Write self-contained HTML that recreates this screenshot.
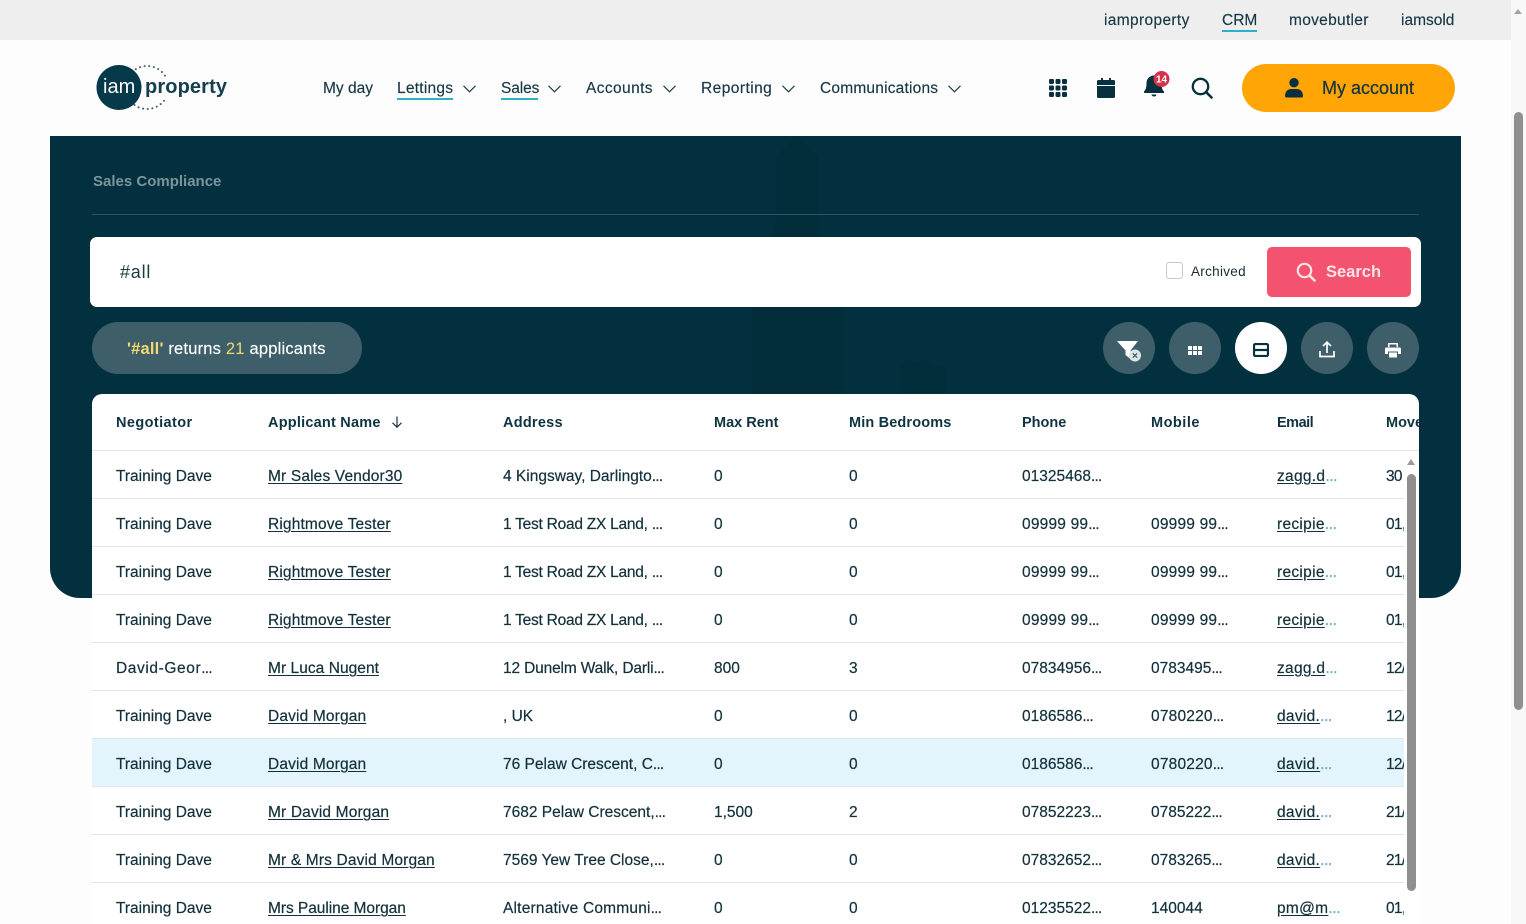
<!DOCTYPE html>
<html lang="en"><head><meta charset="utf-8"><title>Sales Compliance</title>
<style>
*{box-sizing:border-box}
html,body{margin:0;padding:0;width:1526px;height:924px;overflow:hidden;background:#fdfdfd;font-family:"Liberation Sans",sans-serif;color:#0b2f3c}
.a{position:absolute;white-space:nowrap}
#top{position:absolute;left:0;top:0;width:1511px;height:40px;background:#eeeeee}
#sb{position:absolute;left:1511px;top:0;width:15px;height:924px;background:#f8f8f8}
#sb i{position:absolute;left:3px;top:112px;width:9px;height:598px;border-radius:5px;background:#8f8f8f}
#sb b{position:absolute;left:3px;top:9px;width:0;height:0;border-left:4.5px solid transparent;border-right:4.5px solid transparent;border-bottom:5px solid #a3a3a3}
.t{font-size:15.5px;line-height:20px;top:11px;color:#153744;-webkit-text-stroke:.15px #153744}
.n{font-size:15.5px;line-height:20px;top:79px;color:#153744;-webkit-text-stroke:.15px #153744}
.ul{position:absolute;height:2px;background:#2fb0c9}
.chev{position:absolute;top:85px}
#panel{position:absolute;left:50px;top:136px;width:1411px;height:462px;background:#03303f;border-radius:0 0 30px 30px}
#acc{position:absolute;left:1242px;top:64px;width:213px;height:48px;border-radius:24px;background:#ffa505}
.rb{position:absolute;top:322px;width:52px;height:52px;border-radius:50%;background:#3e5f69}
#tbl{position:absolute;left:92px;top:394px;width:1327px;height:530px;background:#fff;border-radius:10px 10px 0 0;overflow:hidden}
.h{position:absolute;top:19px;font-size:14.5px;font-weight:bold;line-height:20px;white-space:nowrap;color:#0f3340}
.r{position:absolute;left:0;width:1312px;height:48px;border-bottom:1px solid #e3e6e8}
.r span{position:absolute;top:16px;font-size:15.5px;line-height:20px;white-space:nowrap;color:#12303c;-webkit-text-stroke:.2px #12303c}
.r u{text-underline-offset:2px}
.r i{font-style:normal;letter-spacing:-.8px}
.e{color:#5cb4d4;text-decoration:none;letter-spacing:-.4px;-webkit-text-stroke:.3px #5cb4d4}
.w{letter-spacing:.2px}
.c1{left:24px}.c2{left:176px;letter-spacing:.15px}.c3{left:411px}.c4{left:622px}.c5{left:757px}.c6{left:930px}.c7{left:1059px}.c8{left:1185px;letter-spacing:.3px}.c9{left:1294px;letter-spacing:-.7px}
</style></head><body>
<div id="top"></div>
<div id="sb"><b></b><i></i></div>
<span class="a t" style="left:1104px;letter-spacing:.35px">iamproperty</span>
<span class="a t" style="left:1222px">CRM</span>
<div class="ul" style="left:1222px;top:30px;width:35px"></div>
<span class="a t" style="left:1289px;letter-spacing:.3px">movebutler</span>
<span class="a t" style="left:1401px">iamsold</span>

<svg class="a" style="left:90px;top:60px" width="145" height="56" viewBox="0 0 145 56">
<circle cx="57" cy="27.5" r="21.5" fill="none" stroke="#4b6670" stroke-width="2" stroke-dasharray="0.1 4.6" stroke-linecap="round"/>
<circle cx="29" cy="27.5" r="22.5" fill="#06394a"/>
<rect x="53" y="18" width="84" height="22" fill="#fdfdfd"/>
<text x="13" y="33" font-family="Liberation Sans" font-size="20" fill="#fff">iam</text>
<text x="55" y="33" font-family="Liberation Sans" font-size="20" font-weight="bold" fill="#143f4d" textLength="82">property</text>
</svg>

<span class="a n" style="left:323px">My day</span>
<span class="a n" style="left:397px;letter-spacing:.25px">Lettings</span>
<div class="ul" style="left:397px;top:98px;width:56px"></div>
<span class="a n" style="left:501px;letter-spacing:-.1px">Sales</span>
<div class="ul" style="left:501px;top:98px;width:37px"></div>
<span class="a n" style="left:586px;letter-spacing:.4px">Accounts</span>
<span class="a n" style="left:701px;letter-spacing:.45px">Reporting</span>
<span class="a n" style="left:820px;letter-spacing:.2px">Communications</span>
<svg class="chev" style="left:463px" width="13" height="8" viewBox="0 0 13 8"><path d="M.5.8 6.500 6.800 12.500.8" fill="none" stroke="#153744" stroke-width="1.100"/></svg>
<svg class="chev" style="left:548px" width="13" height="8" viewBox="0 0 13 8"><path d="M.5.8 6.500 6.800 12.500.8" fill="none" stroke="#153744" stroke-width="1.100"/></svg>
<svg class="chev" style="left:663px" width="13" height="8" viewBox="0 0 13 8"><path d="M.5.8 6.500 6.800 12.500.8" fill="none" stroke="#153744" stroke-width="1.100"/></svg>
<svg class="chev" style="left:782px" width="13" height="8" viewBox="0 0 13 8"><path d="M.5.8 6.500 6.800 12.500.8" fill="none" stroke="#153744" stroke-width="1.100"/></svg>
<svg class="chev" style="left:948px" width="13" height="8" viewBox="0 0 13 8"><path d="M.5.8 6.500 6.800 12.500.8" fill="none" stroke="#153744" stroke-width="1.100"/></svg>

<svg class="a" style="left:1049px;top:79px" width="18" height="18" viewBox="0 0 18 18" fill="#06303f">
<rect x="0" y="0" width="5" height="5" rx="1.200"/><rect x="6.500" y="0" width="5" height="5" rx="1.200"/><rect x="13" y="0" width="5" height="5" rx="1.200"/>
<rect x="0" y="6.500" width="5" height="5" rx="1.200"/><rect x="6.500" y="6.500" width="5" height="5" rx="1.200"/><rect x="13" y="6.500" width="5" height="5" rx="1.200"/>
<rect x="0" y="13" width="5" height="5" rx="1.200"/><rect x="6.500" y="13" width="5" height="5" rx="1.200"/><rect x="13" y="13" width="5" height="5" rx="1.200"/></svg>
<svg class="a" style="left:1097px;top:78px" width="18" height="20" viewBox="0 0 18 20" fill="#06303f">
<path d="M4 0h2v3H4zM12 0h2v3h-2z"/><path d="M1.500 2H16.500A1.500 1.500 0 0 1 18 3.500V7H0V3.500A1.500 1.500 0 0 1 1.500 2Z"/><path d="M0 8H18V18.500A1.500 1.500 0 0 1 16.500 20H1.500A1.500 1.500 0 0 1 0 18.500Z"/></svg>
<svg class="a" style="left:1144px;top:70px" width="28" height="30" viewBox="0 0 28 30">
<path fill="#06303f" d="M10 5.500c4.500 0 7.500 3.500 7.500 7.500 0 5 1 7 2.500 8.500.5.700 0 1.500-.8 1.500H.8c-.8 0-1.300-.8-.8-1.500C1.500 20 2.500 18 2.500 13c0-4 3-7.500 7.500-7.500Z"/>
<path fill="#06303f" d="M7.500 24.500h5a2.500 2 0 0 1-5 0Z"/>
<circle cx="17.500" cy="9" r="8" fill="#d4314b"/>
<text x="17.500" y="12.500" text-anchor="middle" font-family="Liberation Sans" font-size="10" font-weight="bold" fill="#fff">14</text></svg>
<svg class="a" style="left:1191px;top:77px" width="22" height="22" viewBox="0 0 22 22"><circle cx="9.500" cy="9.500" r="7.700" fill="none" stroke="#06303f" stroke-width="2.300"/><path d="M15 15 20.500 20.500" stroke="#06303f" stroke-width="2.600" stroke-linecap="round"/></svg>

<div id="acc"></div>
<svg class="a" style="left:1285px;top:78px" width="18" height="20" viewBox="0 0 18 20" fill="#06303f"><circle cx="9" cy="4.700" r="4.700"/><path d="M0 18c0-4.500 3-7 6-7h6c3 0 6 2.500 6 7 0 1-.7 1.500-1.500 1.500h-15C.7 19.500 0 19 0 18Z"/></svg>
<span class="a" style="left:1322px;top:77px;font-size:18px;line-height:22px;color:#17343c;-webkit-text-stroke:.25px #17343c">My account</span>

<div id="panel">
<svg width="1411" height="462" viewBox="0 0 1411 462" style="position:absolute;left:0;top:0;border-radius:0 0 30px 30px" fill="#022e3b">
<path d="M747 0 768 20 V80 L778 170 H794 V258 H702 V170 H716 L726 80 V20Z"/>
<path d="M850 258V228l8-5 8 5 8-5 8 5 13 4v26Z" opacity=".7"/>
<path d="M190 258V160l40-30 60 128Z" opacity=".3"/>
<path d="M1360 300V130l40 20v150Z" opacity=".3"/>
</svg>
</div>
<span class="a" style="left:93px;top:172px;font-size:15px;font-weight:bold;line-height:20px;color:#7b959c">Sales Compliance</span>
<div class="a" style="left:92px;top:214px;width:1327px;height:1px;background:#2b5663"></div>
<div class="a" style="left:90px;top:237px;width:1331px;height:70px;background:#fff;border-radius:7px"></div>
<span class="a" style="left:120px;top:261px;font-size:18px;line-height:22px;letter-spacing:.8px;color:#1d3943">#all</span>
<div class="a" style="left:1166px;top:262px;width:17px;height:17px;background:#fff;border:1px solid #c8c8c8;border-radius:3px"></div>
<span class="a" style="left:1191px;top:262px;font-size:13.500px;line-height:20px;letter-spacing:.3px;color:#1a2c33">Archived</span>
<div class="a" style="left:1267px;top:247px;width:144px;height:50px;background:#f4536f;border-radius:5px"></div>
<svg class="a" style="left:1296px;top:262px" width="20" height="20" viewBox="0 0 20 20"><circle cx="8.500" cy="8.500" r="6.700" fill="none" stroke="#fde4e8" stroke-width="2.200"/><path d="M13.500 13.500 18.500 18.500" stroke="#fde4e8" stroke-width="2.600" stroke-linecap="round"/></svg>
<span class="a" style="left:1326px;top:261px;font-size:16.500px;line-height:22px;font-weight:bold;color:#fde4e8">Search</span>

<div class="a" style="left:92px;top:322px;width:270px;height:52px;background:#3e5f69;border-radius:26px"></div>
<span class="a" style="left:127px;top:339px;font-size:16.500px;line-height:20px;letter-spacing:.2px;color:#fff;-webkit-text-stroke:.15px #fff"><b style="color:#f5d76e;font-weight:bold;-webkit-text-stroke:0">'#all'</b> returns <span style="color:#f5d76e;-webkit-text-stroke:0">21</span> applicants</span>

<div class="rb" style="left:1103px"></div>
<div class="rb" style="left:1169px"></div>
<div class="rb" style="left:1235px;background:#fff"></div>
<div class="rb" style="left:1301px"></div>
<div class="rb" style="left:1367px"></div>
<svg class="a" style="left:1116px;top:340px" width="28" height="24" viewBox="0 0 28 24"><path d="M1 1H22L14.500 10.500V19L9.500 15V10.500Z" fill="#fff"/><circle cx="19" cy="15.500" r="6" fill="#dfe5e7"/><path d="M16.800 13.300 21.200 17.700M21.200 13.300 16.800 17.700" stroke="#3e5f69" stroke-width="1.300"/></svg>
<svg class="a" style="left:1188px;top:346px" width="14" height="10" viewBox="0 0 14 10" fill="#fff"><rect x="0" y="0" width="4" height="4"/><rect x="5" y="0" width="4" height="4"/><rect x="10" y="0" width="4" height="4"/><rect x="0" y="5" width="4" height="4"/><rect x="5" y="5" width="4" height="4"/><rect x="10" y="5" width="4" height="4"/></svg>
<svg class="a" style="left:1253px;top:343px" width="16" height="14" viewBox="0 0 16 14"><rect x="1" y="1" width="14" height="12" rx="1.500" fill="none" stroke="#06303f" stroke-width="2.200"/><path d="M1 7H15" stroke="#06303f" stroke-width="2.200"/></svg>
<svg class="a" style="left:1319px;top:341px" width="16" height="17" viewBox="0 0 16 17"><path d="M8 12V1.500M4 5 8 1.200 12 5" fill="none" stroke="#fff" stroke-width="1.700"/><path d="M1 10V15.500H15V10" fill="none" stroke="#fff" stroke-width="1.700"/></svg>
<svg class="a" style="left:1385px;top:342px" width="16" height="16" viewBox="0 0 16 16" fill="#fff"><path d="M3 5V1H13V5H11.500V2.500H4.500V5Z"/><path d="M1.500 5.500H14.500A1.500 1.500 0 0 1 16 7V12H13V9.500H3V12H0V7A1.500 1.500 0 0 1 1.500 5.500Z"/><path d="M4 10.500H12V15.500H4Z"/></svg>

<div id="tbl">
<span class="h c1" style="letter-spacing:.4px">Negotiator</span>
<span class="h c2" style="letter-spacing:.22px">Applicant Name</span>
<svg style="position:absolute;left:299px;top:22px" width="12" height="12" viewBox="0 0 12 12"><path d="M6 .5V11M1.500 6.800 6 11.200 10.500 6.800" fill="none" stroke="#16333f" stroke-width="1.200"/></svg>
<span class="h c3" style="letter-spacing:.25px">Address</span><span class="h c4">Max Rent</span><span class="h c5" style="letter-spacing:.15px">Min Bedrooms</span><span class="h c6">Phone</span><span class="h c7" style="letter-spacing:.5px">Mobile</span><span class="h c8" style="letter-spacing:-.5px">Email</span><span class="h c9" style="letter-spacing:0">Move</span>
<div style="position:absolute;left:0;top:56px;width:1327px;height:1px;background:#e3e6e8"></div>

<div class="r" style="top:57px"><span class="c1">Training Dave</span><span class="c2"><u>Mr Sales Vendor30</u></span><span class="c3">4 Kingsway, Darlingto<i>...</i></span><span class="c4">0</span><span class="c5">0</span><span class="c6">01325468<i>...</i></span><span class="c8"><u>zagg.d</u><a class="e">...</a></span><span class="c9">30</span></div>
<div class="r" style="top:105px"><span class="c1">Training Dave</span><span class="c2"><u>Rightmove Tester</u></span><span class="c3" style="letter-spacing:-.25px">1 Test Road ZX Land, <i>...</i></span><span class="c4">0</span><span class="c5">0</span><span class="c6 w">09999 99<i>...</i></span><span class="c7 w">09999 99<i>...</i></span><span class="c8"><u>recipie</u><a class="e">...</a></span><span class="c9">01,</span></div>
<div class="r" style="top:153px"><span class="c1">Training Dave</span><span class="c2"><u>Rightmove Tester</u></span><span class="c3" style="letter-spacing:-.25px">1 Test Road ZX Land, <i>...</i></span><span class="c4">0</span><span class="c5">0</span><span class="c6 w">09999 99<i>...</i></span><span class="c7 w">09999 99<i>...</i></span><span class="c8"><u>recipie</u><a class="e">...</a></span><span class="c9">01,</span></div>
<div class="r" style="top:201px"><span class="c1">Training Dave</span><span class="c2"><u>Rightmove Tester</u></span><span class="c3" style="letter-spacing:-.25px">1 Test Road ZX Land, <i>...</i></span><span class="c4">0</span><span class="c5">0</span><span class="c6 w">09999 99<i>...</i></span><span class="c7 w">09999 99<i>...</i></span><span class="c8"><u>recipie</u><a class="e">...</a></span><span class="c9">01,</span></div>
<div class="r" style="top:249px"><span class="c1" style="letter-spacing:.6px">David-Geor<i>...</i></span><span class="c2" style="letter-spacing:.05px"><u>Mr Luca Nugent</u></span><span class="c3" style="letter-spacing:-.15px">12 Dunelm Walk, Darli<i>...</i></span><span class="c4">800</span><span class="c5">3</span><span class="c6">07834956<i>...</i></span><span class="c7">0783495<i>...</i></span><span class="c8"><u>zagg.d</u><a class="e">...</a></span><span class="c9">12/</span></div>
<div class="r" style="top:297px"><span class="c1">Training Dave</span><span class="c2"><u>David Morgan</u></span><span class="c3">, UK</span><span class="c4">0</span><span class="c5">0</span><span class="c6">0186586<i>...</i></span><span class="c7 w">0780220<i>...</i></span><span class="c8"><u>david.</u><a class="e">...</a></span><span class="c9">12/</span></div>
<div class="r" style="top:345px;background:#e3f4fc"><span class="c1">Training Dave</span><span class="c2"><u>David Morgan</u></span><span class="c3">76 Pelaw Crescent, C<i>...</i></span><span class="c4">0</span><span class="c5">0</span><span class="c6">0186586<i>...</i></span><span class="c7 w">0780220<i>...</i></span><span class="c8"><u>david.</u><a class="e">...</a></span><span class="c9">12/</span></div>
<div class="r" style="top:393px"><span class="c1">Training Dave</span><span class="c2"><u>Mr David Morgan</u></span><span class="c3">7682 Pelaw Crescent,<i>...</i></span><span class="c4">1,500</span><span class="c5">2</span><span class="c6">07852223<i>...</i></span><span class="c7">0785222<i>...</i></span><span class="c8"><u>david.</u><a class="e">...</a></span><span class="c9">21/</span></div>
<div class="r" style="top:441px"><span class="c1">Training Dave</span><span class="c2"><u>Mr &amp; Mrs David Morgan</u></span><span class="c3">7569 Yew Tree Close,<i>...</i></span><span class="c4">0</span><span class="c5">0</span><span class="c6">07832652<i>...</i></span><span class="c7">0783265<i>...</i></span><span class="c8"><u>david.</u><a class="e">...</a></span><span class="c9">21/</span></div>
<div class="r" style="top:489px;border:0"><span class="c1">Training Dave</span><span class="c2" style="letter-spacing:-.05px"><u>Mrs Pauline Morgan</u></span><span class="c3" style="letter-spacing:.2px">Alternative Communi<i>...</i></span><span class="c4">0</span><span class="c5">0</span><span class="c6">01235522<i>...</i></span><span class="c7">140044</span><span class="c8"><u>pm@m</u><a class="e">...</a></span><span class="c9">01,</span></div>

<div style="position:absolute;left:1312px;top:57px;width:15px;height:473px;background:#fff"></div>
<div style="position:absolute;left:1315px;top:65px;width:0;height:0;border-left:4.500px solid transparent;border-right:4.500px solid transparent;border-bottom:6px solid #9a9a9a"></div>
<div style="position:absolute;left:1315px;top:80px;width:9px;height:417px;border-radius:5px;background:#8f8f8f"></div>
</div>
</body></html>
